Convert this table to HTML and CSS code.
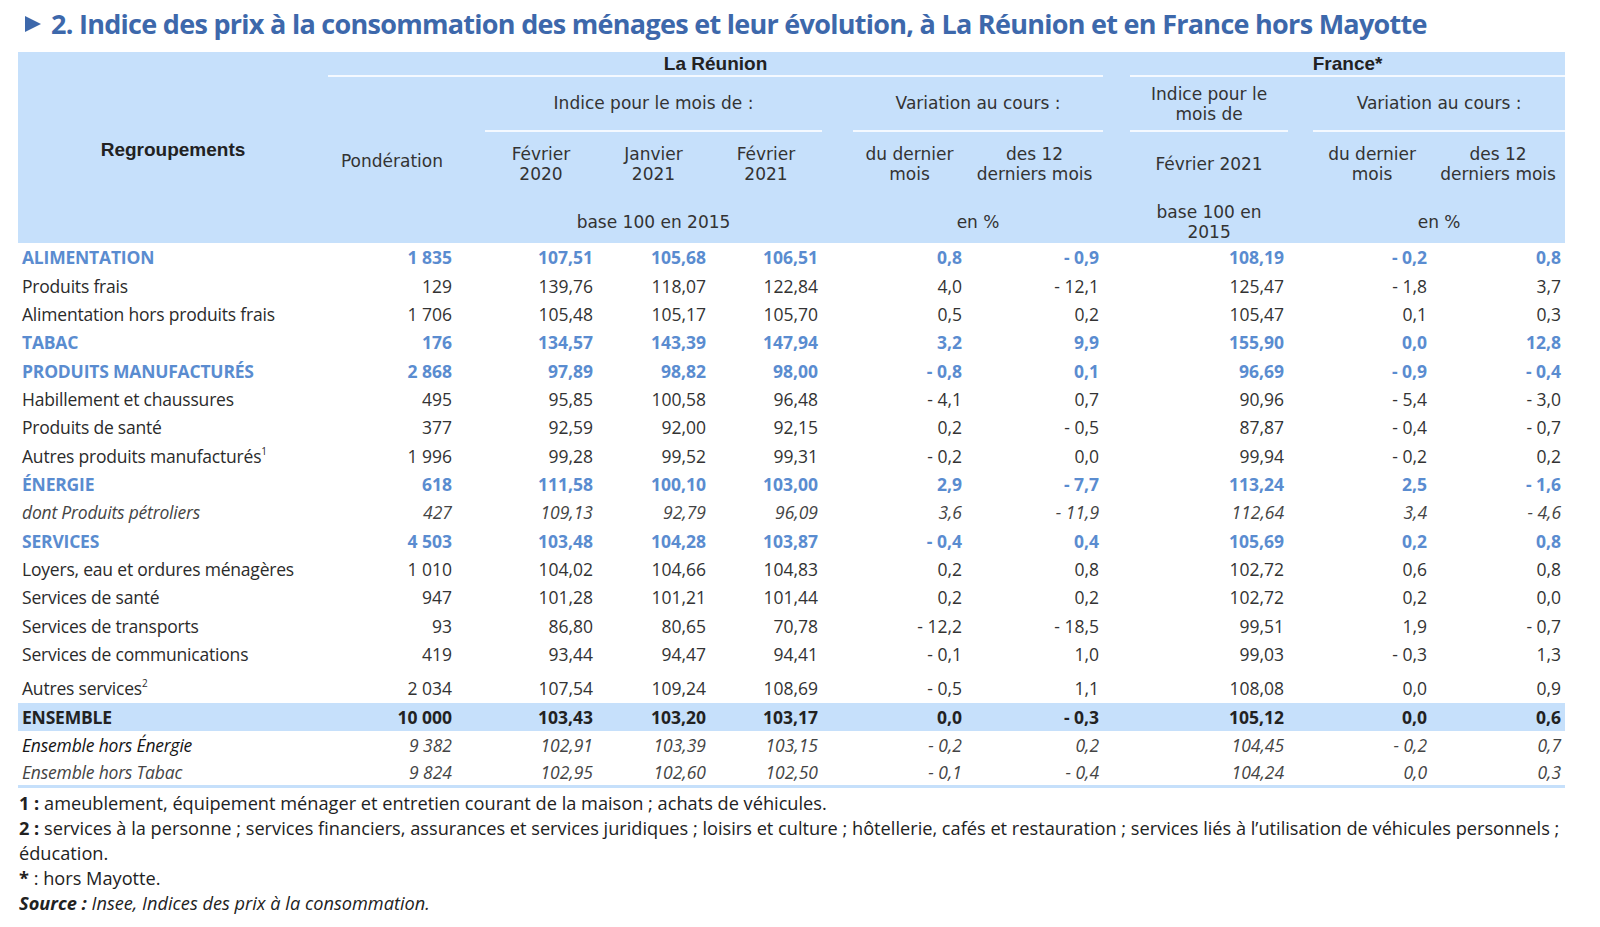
FILE: index.html
```html
<!DOCTYPE html>
<html lang="fr">
<head>
<meta charset="utf-8">
<title>Indice des prix à la consommation</title>
<link rel="stylesheet" href="styles.css">
</head>
<body>
<div class="page">
  <h1 class="title"><svg class="tri" width="16" height="16" viewBox="0 0 16 16"><polygon points="0,0 16,8 0,16" /></svg><span>2. Indice des prix à la consommation des ménages et leur évolution, à La Réunion et en France hors Mayotte</span></h1>

  <table class="ipc">
    <colgroup>
      <col class="c-label"><col class="c-pond"><col class="c-gap1"><col class="c-m"><col class="c-m2"><col class="c-m"><col class="c-gap2"><col class="c-v1"><col class="c-v2"><col class="c-gap3"><col class="c-fi"><col class="c-gap4"><col class="c-fv1"><col class="c-fv2">
    </colgroup>
    <thead>
      <tr class="h1">
        <th rowspan="4" class="arial regroup">Regroupements</th>
        <th colspan="8" class="arial line">La Réunion</th>
        <th rowspan="4"></th>
        <th colspan="4" class="arial line">France*</th>
      </tr>
      <tr class="h2">
        <th rowspan="3" class="pond">Pondération</th>
        <th rowspan="3"></th>
        <th colspan="3" class="line">Indice pour le mois de :</th>
        <th rowspan="3"></th>
        <th colspan="2" class="line">Variation au cours :</th>
        <th class="line two">Indice pour le<br>mois de</th>
        <th rowspan="3"></th>
        <th colspan="2" class="line">Variation au cours :</th>
      </tr>
      <tr class="h3">
        <th>Février<br>2020</th>
        <th>Janvier<br>2021</th>
        <th>Février<br>2021</th>
        <th>du dernier<br>mois</th>
        <th>des 12<br>derniers mois</th>
        <th>Février 2021</th>
        <th>du dernier<br>mois</th>
        <th>des 12<br>derniers mois</th>
      </tr>
      <tr class="h4">
        <th colspan="3">base 100 en 2015</th>
        <th colspan="2">en %</th>
        <th>base 100 en<br>2015</th>
        <th colspan="2">en %</th>
      </tr>
    </thead>
    <tbody>
      <tr class="cat"><td>ALIMENTATION</td><td>1 835</td><td></td><td>107,51</td><td>105,68</td><td>106,51</td><td></td><td>0,8</td><td>- 0,9</td><td></td><td>108,19</td><td></td><td>- 0,2</td><td>0,8</td></tr>
      <tr><td>Produits frais</td><td>129</td><td></td><td>139,76</td><td>118,07</td><td>122,84</td><td></td><td>4,0</td><td>- 12,1</td><td></td><td>125,47</td><td></td><td>- 1,8</td><td>3,7</td></tr>
      <tr><td>Alimentation hors produits frais</td><td>1 706</td><td></td><td>105,48</td><td>105,17</td><td>105,70</td><td></td><td>0,5</td><td>0,2</td><td></td><td>105,47</td><td></td><td>0,1</td><td>0,3</td></tr>
      <tr class="cat"><td>TABAC</td><td>176</td><td></td><td>134,57</td><td>143,39</td><td>147,94</td><td></td><td>3,2</td><td>9,9</td><td></td><td>155,90</td><td></td><td>0,0</td><td>12,8</td></tr>
      <tr class="cat"><td>PRODUITS MANUFACTURÉS</td><td>2 868</td><td></td><td>97,89</td><td>98,82</td><td>98,00</td><td></td><td>- 0,8</td><td>0,1</td><td></td><td>96,69</td><td></td><td>- 0,9</td><td>- 0,4</td></tr>
      <tr><td>Habillement et chaussures</td><td>495</td><td></td><td>95,85</td><td>100,58</td><td>96,48</td><td></td><td>- 4,1</td><td>0,7</td><td></td><td>90,96</td><td></td><td>- 5,4</td><td>- 3,0</td></tr>
      <tr><td>Produits de santé</td><td>377</td><td></td><td>92,59</td><td>92,00</td><td>92,15</td><td></td><td>0,2</td><td>- 0,5</td><td></td><td>87,87</td><td></td><td>- 0,4</td><td>- 0,7</td></tr>
      <tr><td>Autres produits manufacturés<sup>1</sup></td><td>1 996</td><td></td><td>99,28</td><td>99,52</td><td>99,31</td><td></td><td>- 0,2</td><td>0,0</td><td></td><td>99,94</td><td></td><td>- 0,2</td><td>0,2</td></tr>
      <tr class="cat"><td>ÉNERGIE</td><td>618</td><td></td><td>111,58</td><td>100,10</td><td>103,00</td><td></td><td>2,9</td><td>- 7,7</td><td></td><td>113,24</td><td></td><td>2,5</td><td>- 1,6</td></tr>
      <tr class="ital"><td>dont Produits pétroliers</td><td>427</td><td></td><td>109,13</td><td>92,79</td><td>96,09</td><td></td><td>3,6</td><td>- 11,9</td><td></td><td>112,64</td><td></td><td>3,4</td><td>- 4,6</td></tr>
      <tr class="cat"><td>SERVICES</td><td>4 503</td><td></td><td>103,48</td><td>104,28</td><td>103,87</td><td></td><td>- 0,4</td><td>0,4</td><td></td><td>105,69</td><td></td><td>0,2</td><td>0,8</td></tr>
      <tr><td>Loyers, eau et ordures ménagères</td><td>1 010</td><td></td><td>104,02</td><td>104,66</td><td>104,83</td><td></td><td>0,2</td><td>0,8</td><td></td><td>102,72</td><td></td><td>0,6</td><td>0,8</td></tr>
      <tr><td>Services de santé</td><td>947</td><td></td><td>101,28</td><td>101,21</td><td>101,44</td><td></td><td>0,2</td><td>0,2</td><td></td><td>102,72</td><td></td><td>0,2</td><td>0,0</td></tr>
      <tr><td>Services de transports</td><td>93</td><td></td><td>86,80</td><td>80,65</td><td>70,78</td><td></td><td>- 12,2</td><td>- 18,5</td><td></td><td>99,51</td><td></td><td>1,9</td><td>- 0,7</td></tr>
      <tr><td>Services de communications</td><td>419</td><td></td><td>93,44</td><td>94,47</td><td>94,41</td><td></td><td>- 0,1</td><td>1,0</td><td></td><td>99,03</td><td></td><td>- 0,3</td><td>1,3</td></tr>
      <tr class="tall"><td>Autres services<sup>2</sup></td><td>2 034</td><td></td><td>107,54</td><td>109,24</td><td>108,69</td><td></td><td>- 0,5</td><td>1,1</td><td></td><td>108,08</td><td></td><td>0,0</td><td>0,9</td></tr>
      <tr class="total"><td>ENSEMBLE</td><td>10 000</td><td></td><td>103,43</td><td>103,20</td><td>103,17</td><td></td><td>0,0</td><td>- 0,3</td><td></td><td>105,12</td><td></td><td>0,0</td><td>0,6</td></tr>
      <tr class="ital dark"><td>Ensemble hors Énergie</td><td>9 382</td><td></td><td>102,91</td><td>103,39</td><td>103,15</td><td></td><td>- 0,2</td><td>0,2</td><td></td><td>104,45</td><td></td><td>- 0,2</td><td>0,7</td></tr>
      <tr class="ital last"><td>Ensemble hors Tabac</td><td>9 824</td><td></td><td>102,95</td><td>102,60</td><td>102,50</td><td></td><td>- 0,1</td><td>- 0,4</td><td></td><td>104,24</td><td></td><td>0,0</td><td>0,3</td></tr>
    </tbody>
  </table>

  <div class="notes">
    <p><b>1 :</b> ameublement, équipement ménager et entretien courant de la maison ; achats de véhicules.</p>
    <p><b>2 :</b> <span class="nw">services à la personne ; services financiers, assurances et services juridiques ; loisirs et culture ; hôtellerie, cafés et restauration ; services liés à l’utilisation de véhicules personnels ;</span><br><span>éducation.</span></p>
    <p><b>*</b> : hors Mayotte.</p>
    <p class="src"><b>Source :</b> Insee, Indices des prix à la consommation.</p>
  </div>
</div>
</body>
</html>
```

FILE: styles.css
```css
html, body {
  margin: 0;
  padding: 0;
  background: #ffffff;
}

.page {
  padding: 5px 0 0 18px;
  width: 1547px;
  font-family: "Open Sans", "Noto Sans", sans-serif;
  color: #2b2b2b;
}

.title {
  margin: 0 0 9px 0;
  display: flex;
  align-items: center;
  gap: 10px;
  padding-left: 7px;
  font-family: "Open Sans", sans-serif;
  font-weight: 700;
  font-size: 27px;
  line-height: 38px;
  letter-spacing: -0.72px;
  color: #3d68ab;
  white-space: nowrap;
}

.tri {
  flex: none;
  fill: #3d68ab;
}

.ipc {
  width: 1547px;
  table-layout: fixed;
  border-collapse: separate;
  border-spacing: 0;
}

.c-label { width: 310px; }
.c-pond { width: 128px; }
.c-gap1 { width: 29px; }
.c-m { width: 112px; }
.c-m2 { width: 113px; }
.c-gap2 { width: 31px; }
.c-v1 { width: 113px; }
.c-v2 { width: 137px; }
.c-gap3 { width: 27px; }
.c-fi { width: 158px; }
.c-gap4 { width: 25px; }
.c-fv1 { width: 118px; }
.c-fv2 { width: 134px; }

.ipc thead th {
  background: #c6e0fb;
  font-family: "DejaVu Sans", sans-serif;
  font-weight: normal;
  font-size: 17px;
  line-height: 19.5px;
  color: #333;
  text-align: center;
  vertical-align: middle;
  padding: 0;
}

.ipc thead th.arial {
  font-family: "Liberation Sans", Arial, sans-serif;
  font-weight: bold;
  font-size: 19px;
  color: #222;
}

.ipc thead th.regroup {
  padding-top: 4px;
}

.ipc thead th.pond {
  padding-top: 4px;
}

.ipc thead th.two {
  padding-top: 2px;
}

.ipc thead th.line {
  border-bottom: 2px solid #f4f9ff;
}

.h1 { height: 25px; }
.h2 { height: 55px; }
.h3 { height: 65px; }
.h4 { height: 46px; }

.h4 th { padding-top: 5px !important; }

.ipc tbody tr {
  height: 28.36px;
}

.ipc tbody tr.tall {
  height: 34.3px;
}

.ipc tbody td {
  padding: 0 4px 0 0;
  text-align: right;
  font-size: 17.5px;
  line-height: 24px;
  vertical-align: middle;
  white-space: nowrap;
  color: #333;
}

.ipc tbody td:first-child {
  text-align: left;
  padding-left: 4px;
  letter-spacing: -0.2px;
  color: #2b2b2b;
}

.ipc tbody tr.tall td {
  vertical-align: bottom;
  padding-bottom: 3px;
}

sup {
  font-size: 10px;
  line-height: 0;
  vertical-align: 8px;
}

.ipc tbody tr.cat td {
  color: #5a8cd0;
  font-weight: 700;
}

.ipc tbody tr.ital td {
  font-style: italic;
  color: #444;
}

.ipc tbody tr.ital.dark td:first-child {
  color: #151515;
}

.ipc tbody tr.total td {
  background: #c6e0fb;
  font-weight: 700;
  color: #222;
}

.ipc tbody tr.last td {
  border-bottom: 3px solid #c6e0fb;
}

.notes {
  margin-top: 3px;
  font-size: 18.2px;
  line-height: 25px;
  color: #222;
  padding-left: 1px;
}

.notes p {
  margin: 0;
}

.notes .nw {
  white-space: nowrap;
}

.notes .src {
  font-style: italic;
}
```
